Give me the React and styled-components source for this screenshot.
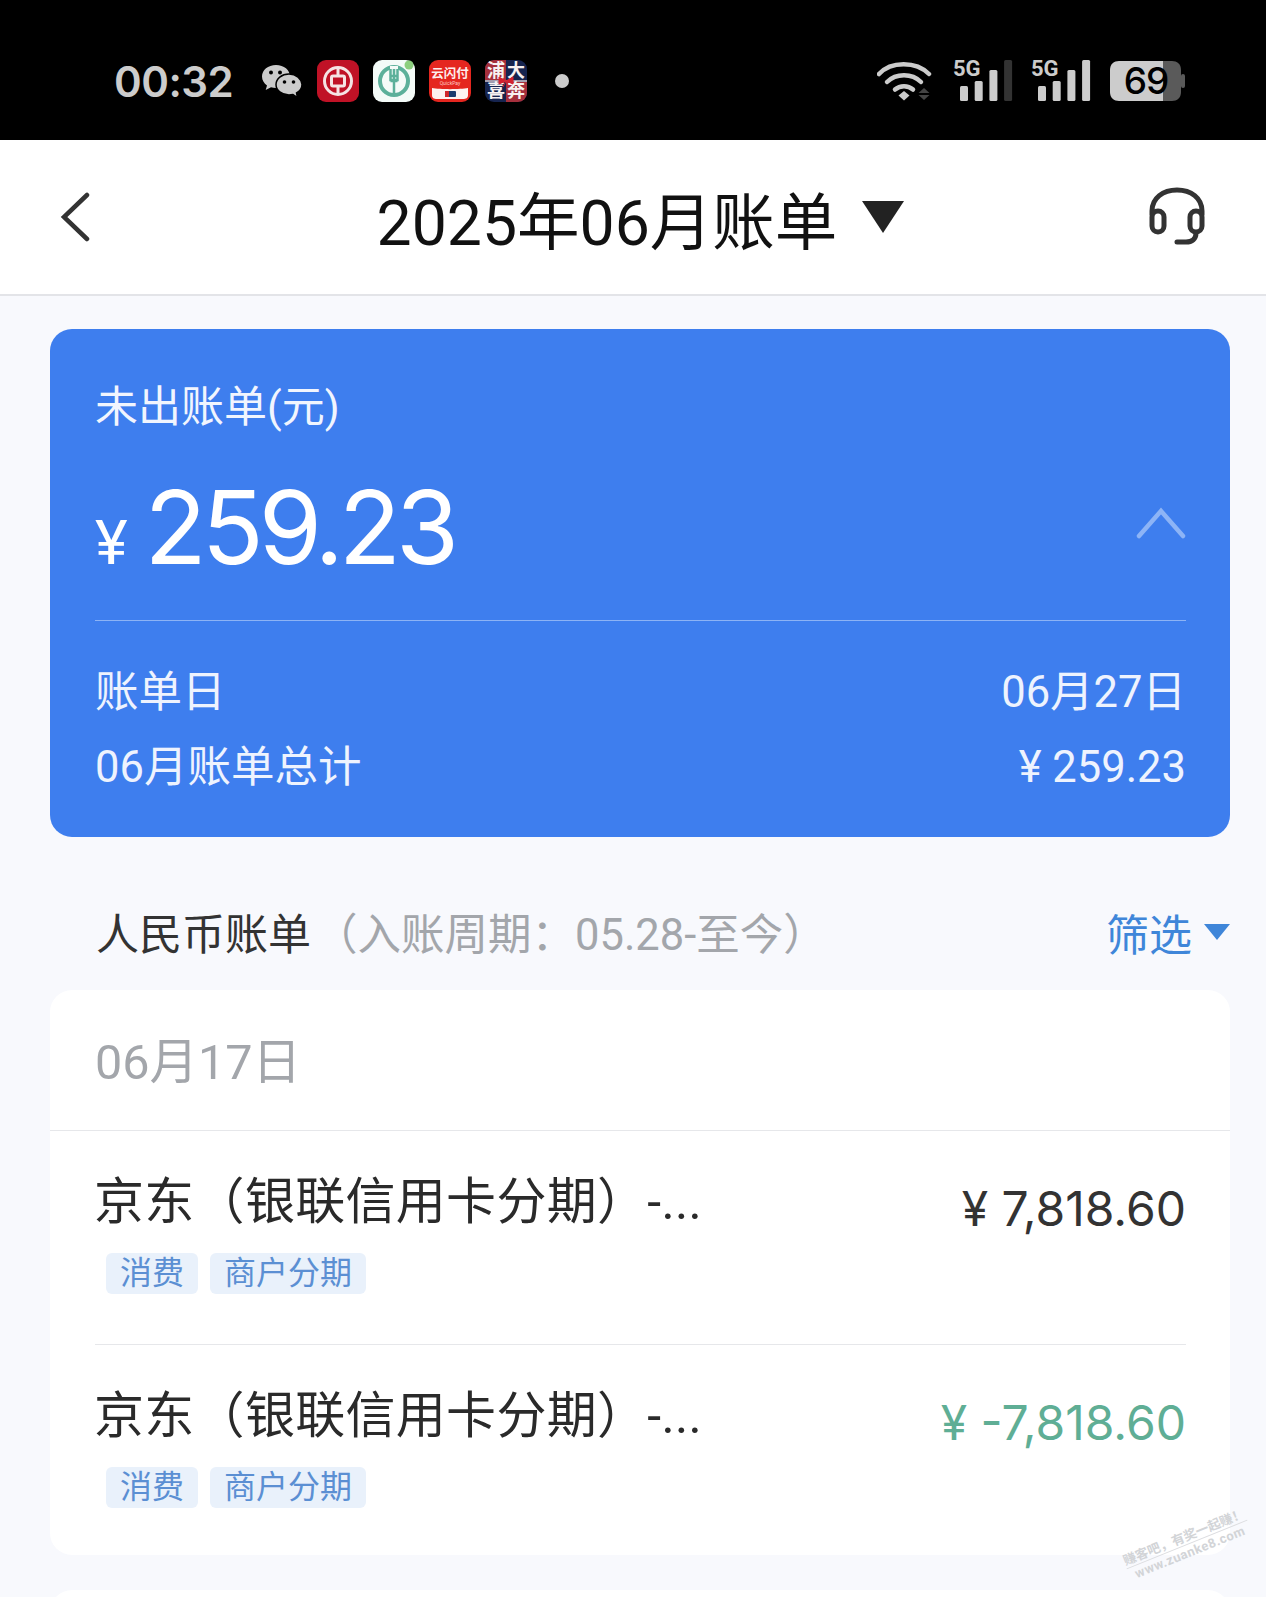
import React from "react"
import styled, { createGlobalStyle } from "styled-components"

const FONT = `Roboto, "Noto Sans CJK SC", sans-serif`
const NUM_FONT = `Inter, "Noto Sans CJK SC", sans-serif`

const Global = createGlobalStyle`
  html, body {
    margin: 0;
    padding: 0;
    background: #f8f9fd;
  }
  * {
    box-sizing: border-box;
  }
`

function WeChat() {
  return (
    <AppSvg width="42" height="36" viewBox="0 0 42 36">
      <path d="M15 2C7 2 1 7 1 13.500c0 3.700 2 6.800 5 8.900L4.700 27l5.300-2.700c1.600.4 3.300.7 5 .7 8 0 14-5 14-11.500S23 2 15 2z" fill="#ccc" />
      <path d="M28 11c-7.300 0-13 4.700-13 10.500S20.700 32 28 32c1.400 0 2.800-.2 4-.5l4.500 3-1-4.500c3.500-2 5.500-5 5.500-8.500C40.500 15.700 35.300 11 28 11z" fill="#ccc" stroke="#000" strokeWidth="1.500" />
      <circle cx="10" cy="9.500" r="2" fill="#000" />
      <circle cx="19" cy="9.500" r="2" fill="#000" />
      <circle cx="23.500" cy="19" r="1.800" fill="#000" />
      <circle cx="32.500" cy="19" r="1.800" fill="#000" />
    </AppSvg>
  )
}

function BocLogo() {
  return (
    <AppSvg width="42" height="42" viewBox="0 0 42 42">
      <rect width="42" height="42" rx="9" fill="#c01226" />
      <circle cx="21" cy="21" r="13.500" fill="none" stroke="#f5e4e4" strokeWidth="3" />
      <rect x="14.500" y="16" width="13" height="10" rx="1.500" fill="none" stroke="#f5e4e4" strokeWidth="3" />
      <path d="M21 7v9M21 26v9" stroke="#f5e4e4" strokeWidth="3" />
    </AppSvg>
  )
}

function AbcLogo() {
  return (
    <AppSvg width="42" height="42" viewBox="0 0 42 42">
      <rect width="42" height="42" rx="9" fill="#f4fbf8" />
      <circle cx="21" cy="21" r="14" fill="none" stroke="#5cb09a" strokeWidth="4" />
      <path d="M17 6v14c0 2 1 3 4 3s4-1 4-3V6" fill="#f4fbf8" />
      <path d="M17.500 9v11h7V9M21 9v26M17.500 16h7M17.500 21h7" fill="none" stroke="#5cb09a" strokeWidth="2.500" />
      <circle cx="36" cy="5" r="4.500" fill="#8ccf7e" />
    </AppSvg>
  )
}

function UnionPayLogo() {
  return (
    <AppSvg width="42" height="42" viewBox="0 0 42 42">
      <rect width="42" height="42" rx="9" fill="#e5261f" />
      <text x="21" y="18" textAnchor="middle" fontSize="12.500" fontWeight="700" fill="#fdeeee" fontFamily={FONT}>云闪付</text>
      <text x="21" y="25" textAnchor="middle" fontSize="5" fill="#ffc9c4" fontFamily={FONT}>QuickPay</text>
      <path d="M3 28c8 1.500 28 1.500 36 0v7c0 3-2 4-5 4H8c-3 0-5-1-5-4z" fill="#fdf3f1" />
      <rect x="16" y="31" width="11" height="6" rx="1" fill="#1d3c6e" />
      <rect x="16" y="31" width="4" height="6" fill="#d0282c" />
    </AppSvg>
  )
}

function PufaLogo() {
  return (
    <AppSvg width="42" height="42" viewBox="0 0 42 42">
      <clipPath id="pufa-clip">
        <rect width="42" height="42" rx="9" />
      </clipPath>
      <g clipPath="url(#pufa-clip)">
        <rect width="42" height="42" fill="#16244f" />
        <rect width="21" height="20" fill="#a52f3c" />
        <rect x="21" y="22" width="21" height="20" fill="#a52f3c" />
        <path d="M0 21h42" stroke="#d9c9d0" strokeWidth="1.500" />
      </g>
      <text x="11" y="17" textAnchor="middle" fontSize="18" fontWeight="700" fill="#f7f1f1" fontFamily={FONT}>浦</text>
      <text x="31" y="17" textAnchor="middle" fontSize="18" fontWeight="700" fill="#f7f1f1" fontFamily={FONT}>大</text>
      <text x="11" y="37" textAnchor="middle" fontSize="18" fontWeight="700" fill="#f7f1f1" fontFamily={FONT}>喜</text>
      <text x="31" y="37" textAnchor="middle" fontSize="18" fontWeight="700" fill="#f7f1f1" fontFamily={FONT}>奔</text>
      <path d="M21 21l-7-4v7zM21 21l7-4v7zM21 21l-3 6M21 21l3 6" fill="#d3202e" stroke="#d3202e" strokeWidth="1" />
    </AppSvg>
  )
}

function WifiIcon() {
  return (
    <svg width="58" height="46" viewBox="0 0 58 46" fill="none" stroke="#ccc" strokeLinecap="round">
      <path d="M2 16C14 3 39 3 52 16" strokeWidth="4.500" />
      <path d="M10 24C19 15 35 15 44 24" strokeWidth="4.500" />
      <path d="M18 31.500C23 27 31 27 36 31.500" strokeWidth="4.500" />
      <path d="M21.500 37.500L27 33l5.500 4.500L27 42.500z" fill="#ccc" stroke="none" />
      <path d="M47 30l5.500 5H41.500zM41.500 37h11L47 42z" fill="#444" stroke="none" />
    </svg>
  )
}

function SignalIcon({ bars }) {
  const heights = [15, 20, 31, 41]
  return (
    <svg width="60" height="46" viewBox="0 0 60 46">
      <text x="0" y="18" fontSize="22" fontWeight="700" fill="#ccc" fontFamily={FONT}>5G</text>
      {heights.map((h, i) => (
        <rect key={i} x={7 + i * 14.700} y={43 - h} width="8" height={h} rx="1.500" fill={i < bars ? "#ccc" : "#333"} />
      ))}
    </svg>
  )
}

function BatteryIcon() {
  return (
    <svg width="78" height="42" viewBox="0 0 78 42">
      <path d="M10 1h44v40H10C5 41 1 38 1 32V10C1 4 5 1 10 1z" fill="#ccc" />
      <path d="M54 1h9c5 0 9 3 9 9v22c0 6-4 9-9 9h-9z" fill="#5a5a5a" />
      <rect x="72" y="14" width="4" height="14" rx="2" fill="#5a5a5a" />
      <text x="37" y="34" textAnchor="middle" fontSize="37" fontWeight="500" letterSpacing="-1" fill="#000" fontFamily={NUM_FONT}>69</text>
    </svg>
  )
}

function BillRow({ amount, refund }) {
  return (
    <Row>
      <RowMain>
        <RowTitle>京东（银联信用卡分期）-...</RowTitle>
        <Tags>
          <Tag>消费</Tag>
          <Tag>商户分期</Tag>
        </Tags>
      </RowMain>
      <RowAmount $refund={refund}>{amount}</RowAmount>
    </Row>
  )
}

export default function App() {
  return (
    <Page>
      <Global />
      <StatusBar>
        <Time>00:32</Time>
        <AppIcons>
          <WeChat />
          <BocLogo />
          <AbcLogo />
          <UnionPayLogo />
          <PufaLogo />
          <Dot />
        </AppIcons>
        <SystemIcons>
          <WifiIcon />
          <SignalIcon bars={3} />
          <SignalIcon bars={4} />
          <BatteryIcon />
        </SystemIcons>
      </StatusBar>

      <Header>
        <svg width="32" height="50" viewBox="0 0 32 50" fill="none" stroke="#333" strokeWidth="4.500" strokeLinecap="round">
          <path d="M27 3L4 25l23 22" />
        </svg>
        <HeaderTitle>
          2025年06月账单
          <DownTriangle />
        </HeaderTitle>
        <svg width="58" height="60" viewBox="0 0 58 60" fill="none" stroke="#333" strokeWidth="5" strokeLinecap="round">
          <path d="M4 27V24C4 11 15 3 29 3s25 8 25 21v3" />
          <rect x="4" y="24" width="12" height="21" rx="6" />
          <rect x="42" y="24" width="12" height="21" rx="6" />
          <path d="M48 46c0 6-4 9-10 9h-9" />
        </svg>
      </Header>

      <Content>
        <SummaryCard>
          <SummaryLabel>未出账单(元)</SummaryLabel>
          <AmountRow>
            <Amount>
              <Currency>¥</Currency>259.23
            </Amount>
            <CollapseIcon width="52" height="32" viewBox="0 0 52 32" fill="none" stroke="#8db4f6" strokeWidth="4.500" strokeLinecap="round">
              <path d="M5 29L27 4l22 25" />
            </CollapseIcon>
          </AmountRow>
          <SummaryDetails>
            <SummaryLine>
              <span>账单日</span>
              <span>06月27日</span>
            </SummaryLine>
            <SummaryLine>
              <span>06月账单总计</span>
              <span>¥ 259.23</span>
            </SummaryLine>
          </SummaryDetails>
        </SummaryCard>

        <SectionHead>
          <SectionTitle>
            人民币账单<Period>（入账周期：05.28-至今）</Period>
          </SectionTitle>
          <Filter>
            筛选
            <FilterTriangle />
          </Filter>
        </SectionHead>

        <ListCard>
          <DateRow>06月17日</DateRow>
          <BillRow amount="¥ 7,818.60" />
          <BillRow amount="¥ -7,818.60" refund />
        </ListCard>
        <NextCard />
      </Content>

      <Watermark>
        <WatermarkSlogan>赚客吧，有奖一起赚！</WatermarkSlogan>
        <WatermarkUrl>www.zuanke8.com</WatermarkUrl>
      </Watermark>
    </Page>
  )
}

const Page = styled.div`
  position: relative;
  width: 1266px;
  height: 1597px;
  overflow: hidden;
  background: #f8f9fd;
  font-family: ${FONT};
`

const StatusBar = styled.div`
  display: flex;
  align-items: center;
  height: 140px;
  padding: 22px 79px 0 114px;
  background: #000;
`

const Time = styled.div`
  font-family: ${NUM_FONT};
  font-size: 42px;
  font-weight: 600;
  color: #ccc;
  width: 148px;
  letter-spacing: -0.5px;
`

const AppIcons = styled.div`
  display: flex;
  align-items: center;
  gap: 14px;
  margin-left: -1px;
`

const AppSvg = styled.svg`
  display: block;
  flex: none;
`

const Dot = styled.div`
  width: 14px;
  height: 14px;
  margin-left: 14px;
  border-radius: 50%;
  background: #ccc;
`

const SystemIcons = styled.div`
  display: flex;
  align-items: center;
  gap: 18px;
  margin-left: auto;
`

const Header = styled.header`
  display: flex;
  align-items: center;
  justify-content: space-between;
  height: 156px;
  padding: 0 60px;
  background: #fff;
  border-bottom: 2px solid #e3e4e8;
`

const HeaderTitle = styled.h1`
  display: flex;
  align-items: center;
  margin: 0 0 0 41px;
  font-size: 62.500px;
  font-weight: 400;
  color: #111;
`

const DownTriangle = styled.i`
  width: 0;
  height: 0;
  margin-left: 25px;
  border-left: 21px solid transparent;
  border-right: 21px solid transparent;
  border-top: 32px solid #222;
`

const Content = styled.main`
  display: flex;
  flex-direction: column;
  padding: 33px 36px 0 50px;
`

const SummaryCard = styled.section`
  height: 508px;
  padding: 46px 44px 0 45px;
  background: #3e7eee;
  border-radius: 22px;
  color: #fff;
`

const SummaryLabel = styled.div`
  font-size: 43px;
  line-height: 64px;
  color: #f1f5fe;
`

const AmountRow = styled.div`
  display: flex;
  align-items: center;
  justify-content: space-between;
  height: 182px;
  padding-bottom: 5px;
  border-bottom: 1px solid #8db3f5;
`

const Amount = styled.div`
  font-family: ${NUM_FONT};
  font-size: 102px;
  letter-spacing: -5px;
  line-height: 1;
`

const Currency = styled.span`
  font-family: ${FONT};
  font-size: 62px;
  letter-spacing: 0;
  margin-right: 17px;
`

const CollapseIcon = styled.svg`
  margin-bottom: 8px;
`

const SummaryDetails = styled.div`
  display: flex;
  flex-direction: column;
  gap: 15px;
  padding-top: 42px;
`

const SummaryLine = styled.div`
  display: flex;
  justify-content: space-between;
  font-size: 43.500px;
  line-height: 60px;
  color: #eef3fe;
`

const SectionHead = styled.div`
  display: flex;
  align-items: center;
  justify-content: space-between;
  height: 153px;
  padding: 36px 0 0 46px;
`

const SectionTitle = styled.div`
  font-size: 43px;
  color: #333;
`

const Period = styled.span`
  margin-left: 3px;
  font-size: 43.500px;
  color: #a3a6ab;
`

const Filter = styled.div`
  display: flex;
  align-items: center;
  font-size: 43px;
  color: #3f86d9;
`

const FilterTriangle = styled.i`
  width: 0;
  height: 0;
  margin-left: 12px;
  border-left: 13px solid transparent;
  border-right: 13px solid transparent;
  border-top: 16px solid #3f86d9;
`

const ListCard = styled.section`
  height: 565px;
  background: #fff;
  border-radius: 22px;
`

const NextCard = styled.section`
  height: 60px;
  margin-top: 35px;
  background: #fff;
  border-radius: 22px 22px 0 0;
`

const DateRow = styled.div`
  display: flex;
  align-items: center;
  height: 141px;
  padding: 0 0 5px 45px;
  border-bottom: 1px solid #e6e7ea;
  font-size: 48.500px;
  color: #a3a6ab;
`

const Row = styled.div`
  display: flex;
  justify-content: space-between;
  height: 213px;
  margin: 0 44px 0 45px;
  padding-top: 36px;

  & + & {
    border-top: 1px solid #e6e7ea;
  }
`

const RowMain = styled.div`
  display: flex;
  flex-direction: column;
`

const RowTitle = styled.div`
  margin-left: -1px;
  font-size: 50px;
  letter-spacing: 0.3px;
  line-height: 70px;
  color: #2a2a2a;
`

const Tags = styled.div`
  display: flex;
  gap: 12px;
  margin: 16px 0 0 11px;
`

const Tag = styled.span`
  padding: 0 14px;
  height: 41px;
  line-height: 41px;
  border-radius: 6px;
  background: #e9f1fb;
  color: #5b8fd3;
  font-size: 32px;
`

const RowAmount = styled.div`
  font-family: ${NUM_FONT};
  font-size: 48px;
  line-height: 84px;
  color: ${(p) => (p.$refund ? "#5fae95" : "#333")};
`

const Watermark = styled.div`
  position: absolute;
  left: 1122px;
  bottom: 37px;
  display: flex;
  flex-direction: column;
  align-items: center;
  font-weight: 700;
  color: #d2d4d7;
  transform: rotate(-22deg);
`

const WatermarkSlogan = styled.span`
  font-size: 13px;
  line-height: 15px;
  border-bottom: 1px solid #dcdde0;
`

const WatermarkUrl = styled.span`
  font-size: 13px;
  line-height: 15px;
  letter-spacing: 0.5px;
`
